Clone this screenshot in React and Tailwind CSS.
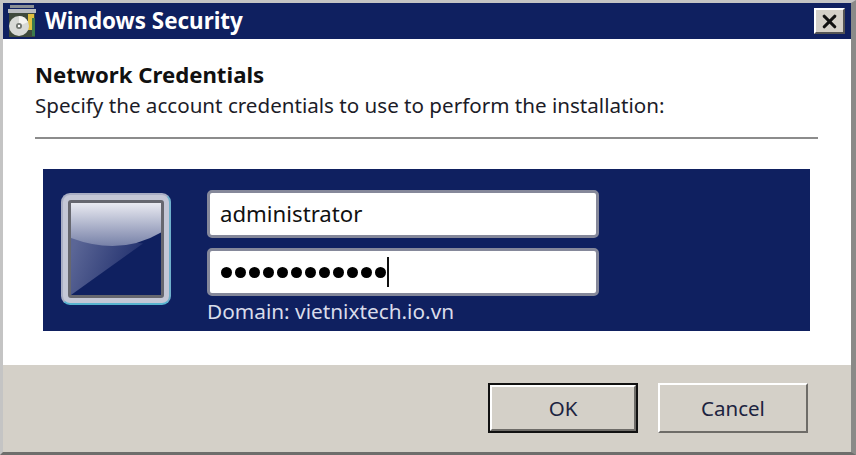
import { X } from 'lucide-react'

const font = { fontFamily: '"Noto Sans", sans-serif' }

function DiscIcon() {
  return (
    <svg width="30" height="34" viewBox="0 0 30 34" className="shrink-0">
      <rect x="3" y="1" width="24" height="3" fill="#8a8f94" />
      <rect x="1" y="5" width="28" height="4" fill="#b9bcc0" />
      <rect x="2" y="9" width="26" height="24" fill="#3f4a3c" />
      <rect x="21" y="10" width="6" height="16" fill="#e0c040" />
      <rect x="25" y="14" width="3" height="18" fill="#3c7a4c" />
      <circle cx="12" cy="22" r="10" fill="#d8dad6" />
      <path d="M12 12a10 10 0 0 1 9 6l-9 4z" fill="#f4f4f0" />
      <circle cx="12" cy="22" r="3" fill="#70756f" />
      <circle cx="12" cy="22" r="1.2" fill="#fff" />
    </svg>
  )
}

function GlassTile() {
  return (
    <div className="w-[110px] h-[112px] shrink-0 rounded-[9px] border-[2px] border-[#a9aec4] border-r-[#6fb0cc] border-b-[#58b4d0] bg-[#c4c7d6] p-[5px]">
      <div className="relative w-full h-full rounded-[3px] border-[3px] border-[#66676f] bg-[#0f2060] overflow-hidden">
        <svg className="absolute inset-0 w-full h-full" viewBox="0 0 100 100" preserveAspectRatio="none">
          <defs>
            <linearGradient id="shine" x1="0" y1="0" x2="0" y2="1">
              <stop offset="0" stopColor="#e9eaf1" />
              <stop offset="1" stopColor="#7781a8" />
            </linearGradient>
            <linearGradient id="streak" x1="0" y1="0.3" x2="1" y2="0.6">
              <stop offset="0" stopColor="#5b6696" />
              <stop offset="1" stopColor="#1c2b6a" />
            </linearGradient>
          </defs>
          <path d="M0 36 L80 44 L0 100 Z" fill="url(#streak)" />
          <path d="M0 0 H100 V32 Q55 58 0 38 Z" fill="url(#shine)" />
        </svg>
      </div>
    </div>
  )
}

function Field({ children }) {
  return (
    <div className="flex items-center w-[392px] h-[48px] px-[10px] bg-white rounded-[5px] border-[3px] border-[#85889a] text-[22.2px] text-[#111]">
      {children}
    </div>
  )
}

function DialogButton({ label, isDefault }) {
  return (
    <button className={`w-[150px] h-[50px] ${isDefault ? 'border-2 border-[#111]' : ''}`}>
      <span className="w-full h-full flex items-center justify-center bg-[#d4d0c8] text-[20.5px] text-[#1c2340] border-2 border-t-white border-l-white border-r-[#6e6c68] border-b-[#6e6c68]">
        {label}
      </span>
    </button>
  )
}

export default function App() {
  return (
    <div style={font} className="w-[856px] h-[455px] flex flex-col bg-[#d4d0c8] border-t-[3px] border-l-[3px] border-r-[5px] border-b-[3px] border-t-[#c4c4c4] border-l-[#c4c4c4] border-r-[#8a8a88] border-b-[#6e6e6c] overflow-hidden">
      <div className="h-[36px] shrink-0 flex items-center justify-between bg-[#0f2060] pl-[4px] pr-[6px]">
        <div className="flex items-center gap-[8px]">
          <DiscIcon />
          <span className="text-[22.4px] font-bold text-white leading-none">Windows Security</span>
        </div>
        <div className="w-[31px] h-[26px] flex items-center justify-center bg-[#d4d0c8] border-2 border-t-white border-l-white border-r-[#555] border-b-[#555]">
          <X size={21} strokeWidth={3.6} color="#111" />
        </div>
      </div>

      <div className="h-[326px] shrink-0 bg-white pt-[21px] pl-[32px] pr-[33px]">
        <h1 className="text-[22.2px] font-bold leading-[30px] text-[#111]">Network Credentials</h1>
        <p className="mt-[2px] text-[20.6px] leading-[27px] text-[#1c1c28] whitespace-nowrap">
          Specify the account credentials to use to perform the installation:
        </p>
        <div className="mt-[18px] h-[2px] bg-[#8c8c8c]" />
        <div className="mt-[30px] mx-[8px] h-[162px] flex bg-[#0f2060] pl-[18px] pt-[21px]">
          <div className="pt-[3px]">
            <GlassTile />
          </div>
          <div className="ml-[36px]">
            <Field>administrator</Field>
            <div className="mt-[10px]">
              <Field>
                <span className="ml-[1px] flex items-center gap-[3px]">
                  {Array.from({ length: 12 }).map((_, i) => (
                    <span key={i} className="w-[11px] h-[11px] rounded-full bg-black" />
                  ))}
                </span>
                <span className="ml-[1px] w-[2px] h-[30px] bg-[#111]" />
              </Field>
            </div>
            <p className="mt-[2px] text-[20.8px] leading-[26px] text-[#d9dcea] whitespace-nowrap">Domain: vietnixtech.io.vn</p>
          </div>
        </div>
      </div>

      <div className="flex-1 flex justify-end gap-[20px] pt-[18px] pr-[43px]">
        <DialogButton label="OK" isDefault />
        <DialogButton label="Cancel" />
      </div>
    </div>
  )
}
